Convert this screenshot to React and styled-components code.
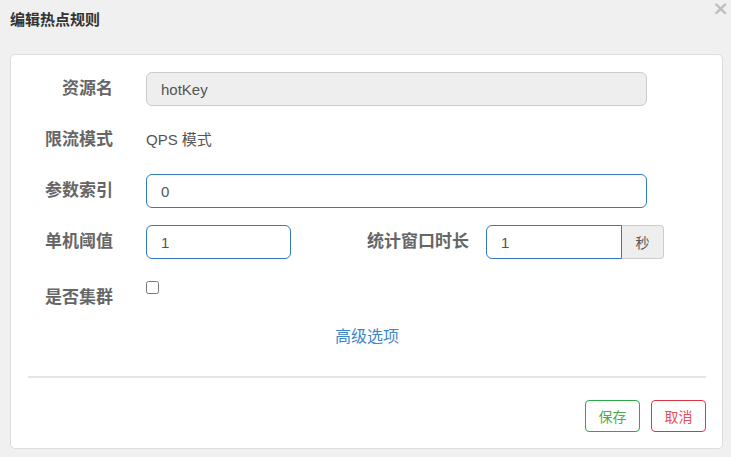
import React from 'react';
import styled, { createGlobalStyle } from 'styled-components';

const GlobalStyle = createGlobalStyle`
  html, body {
    margin: 0;
    padding: 0;
    background: #f0f0f0;
  }

  body {
    font-family: 'Liberation Sans', 'Noto Sans CJK SC', sans-serif;
    color: #333;
  }
`;

const App = () => {
  return (
    <>
      <GlobalStyle />
      <Page>
        <Header>
          <Title>编辑热点规则</Title>
          <Close>×</Close>
        </Header>

        <Card>
          <Form>
            <Row>
              <Label>资源名</Label>
              <Input value="hotKey" disabled readOnly />
            </Row>

            <Row>
              <Label>限流模式</Label>
              <StaticText>QPS 模式</StaticText>
            </Row>

            <Row>
              <Label>参数索引</Label>
              <Input value="0" active readOnly />
            </Row>

            <Row>
              <Label>单机阈值</Label>
              <Fields>
                <Input value="1" active readOnly width="145px" />
                <SubLabel>统计窗口时长</SubLabel>
                <InputGroup>
                  <Input value="1" active readOnly width="136px" grouped />
                  <Addon>秒</Addon>
                </InputGroup>
              </Fields>
            </Row>

            <Row top>
              <Label>是否集群</Label>
              <CheckboxWrap>
                <Checkbox type="checkbox" />
              </CheckboxWrap>
            </Row>
          </Form>

          <Advanced>高级选项</Advanced>

          <Divider />

          <Footer>
            <Button tone="save">保存</Button>
            <Button tone="cancel">取消</Button>
          </Footer>
        </Card>
      </Page>
    </>
  );
};

export default App;

// Header
const Page = styled.div`
  width: 713px;
  padding: 0 8px 0 10px;
`;

const Header = styled.div`
  display: flex;
  justify-content: space-between;
  align-items: flex-start;
  height: 54px;
  margin-right: -8px;
`;

const Title = styled.h4`
  margin: 11px 0 0 0;

  font-size: 15px;
  font-weight: bold;
  line-height: 18px;
  color: #333;
`;

const Close = styled.span`
  margin: 0 2px 0 0;

  font-family: 'DejaVu Sans', sans-serif;
  font-size: 20px;
  font-weight: bold;
  line-height: 16px;
  color: #000;
  opacity: 0.2;
`;

// Card
const Card = styled.div`
  box-sizing: border-box;
  height: 395px;
  padding: 17px 16px 15px 17px;

  background: #fff;
  border: 1px solid #ddd;
  border-radius: 5px;
`;

const Form = styled.div`
  display: flex;
  flex-direction: column;
  gap: 17px;
`;

const Row = styled.div`
  display: grid;
  grid-template-columns: 85px 1fr;
  column-gap: 33px;
  align-items: ${(props) => (props.top ? 'start' : 'center')};
  min-height: 34px;
  margin-top: ${(props) => (props.top ? '5px' : '0')};
`;

const Label = styled.label`
  font-size: 17px;
  font-weight: bold;
  line-height: 34px;
  text-align: right;
  white-space: nowrap;
  color: #666;
`;

const StaticText = styled.div`
  font-size: 15px;
  line-height: 34px;
  color: #555;
`;

const Fields = styled.div`
  display: flex;
  align-items: center;
`;

const SubLabel = styled(Label)`
  width: 178px;
  margin-right: 17px;
`;

const Input = styled.input`
  box-sizing: border-box;
  width: ${(props) => props.width || '501px'};
  height: 34px;
  padding: 0 14px;

  font-family: inherit;
  font-size: 15px;
  color: #555;

  background: ${(props) => (props.disabled ? '#eee' : '#fff')};
  border: 1px solid ${(props) => (props.active ? '#3279bd' : '#ccc')};
  border-radius: ${(props) => (props.grouped ? '6px 0 0 6px' : '6px')};
  outline: none;
`;

const InputGroup = styled.div`
  display: flex;
`;

const Addon = styled.span`
  box-sizing: border-box;
  display: flex;
  align-items: center;
  justify-content: center;
  width: 42px;
  height: 34px;

  font-size: 14px;
  color: #555;

  background: #eee;
  border: 1px solid #ccc;
  border-left: none;
  border-radius: 0 4px 4px 0;
`;

const CheckboxWrap = styled.div`
  display: flex;
  height: 34px;
`;

const Checkbox = styled.input`
  width: 13px;
  height: 13px;
  margin: 0;
`;

// Footer
const Advanced = styled.div`
  margin-top: 12px;

  font-size: 16px;
  line-height: 20px;
  text-align: center;
  color: #3c87c8;
`;

const Divider = styled.div`
  height: 2px;
  margin: 29px 0 0 0;
  background: #e5e5e5;
`;

const Footer = styled.div`
  display: flex;
  justify-content: flex-end;
  gap: 11px;
  margin-top: 22px;
`;

const Button = styled.button`
  box-sizing: border-box;
  width: 55px;
  height: 32px;
  padding: 0;

  font-family: inherit;
  font-size: 14px;
  color: ${(props) => (props.tone === 'save' ? '#4cae4c' : '#e0505d')};

  background: #fff;
  border: 1px solid ${(props) => (props.tone === 'save' ? '#2ea844' : '#dc3545')};
  border-radius: 4px;
`;
